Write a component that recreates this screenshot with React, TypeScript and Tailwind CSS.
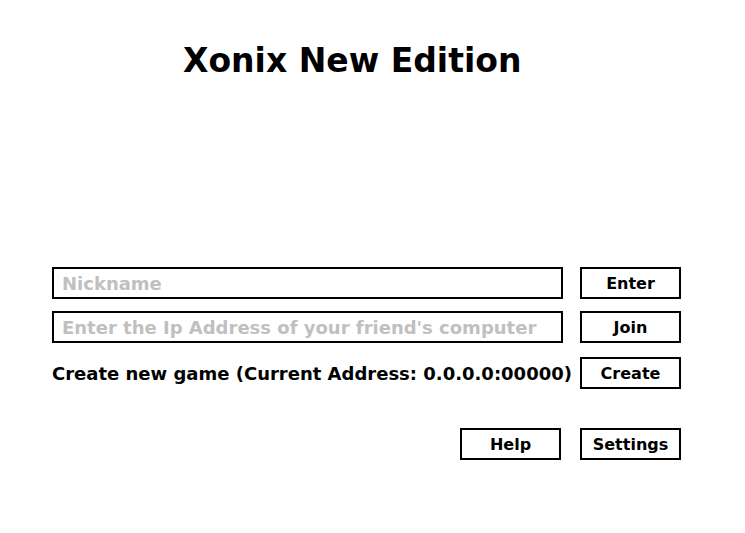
import React from "react";

const btn =
  "w-[101px] h-[32px] pt-[2px] border-2 border-black bg-white text-black text-[16px] font-bold flex items-center justify-center";

const field =
  "w-[511px] h-[32px] border-2 border-black px-2 text-[18px] font-bold outline-none placeholder:text-[#c0c0c0]";

const App = () => {
  return (
    <div className="w-[745px] h-[533px] bg-white text-black font-['DejaVu_Sans',sans-serif] font-bold">
      <div className="pt-[37px] pl-[183px]">
        <h1 className="text-[33px] leading-[48px] font-bold">Xonix New Edition</h1>
      </div>
      <div className="mt-[182px] pl-[52px] flex flex-col">
        <div className="flex items-center">
          <input className={field} placeholder="Nickname" />
          <button className={`ml-[17px] ${btn}`}>Enter</button>
        </div>
        <div className="flex items-center mt-[12px]">
          <input className={field} placeholder="Enter the Ip Address of your friend's computer" />
          <button className={`ml-[17px] ${btn}`}>Join</button>
        </div>
        <div className="flex items-center justify-between w-[629px] mt-[14px]">
          <span className="text-[18px]">Create new game (Current Address: 0.0.0.0:00000)</span>
          <button className={btn}>Create</button>
        </div>
        <div className="flex justify-end gap-[19px] w-[629px] mt-[39px]">
          <button className={btn}>Help</button>
          <button className={btn}>Settings</button>
        </div>
      </div>
    </div>
  );
};

export default App;
